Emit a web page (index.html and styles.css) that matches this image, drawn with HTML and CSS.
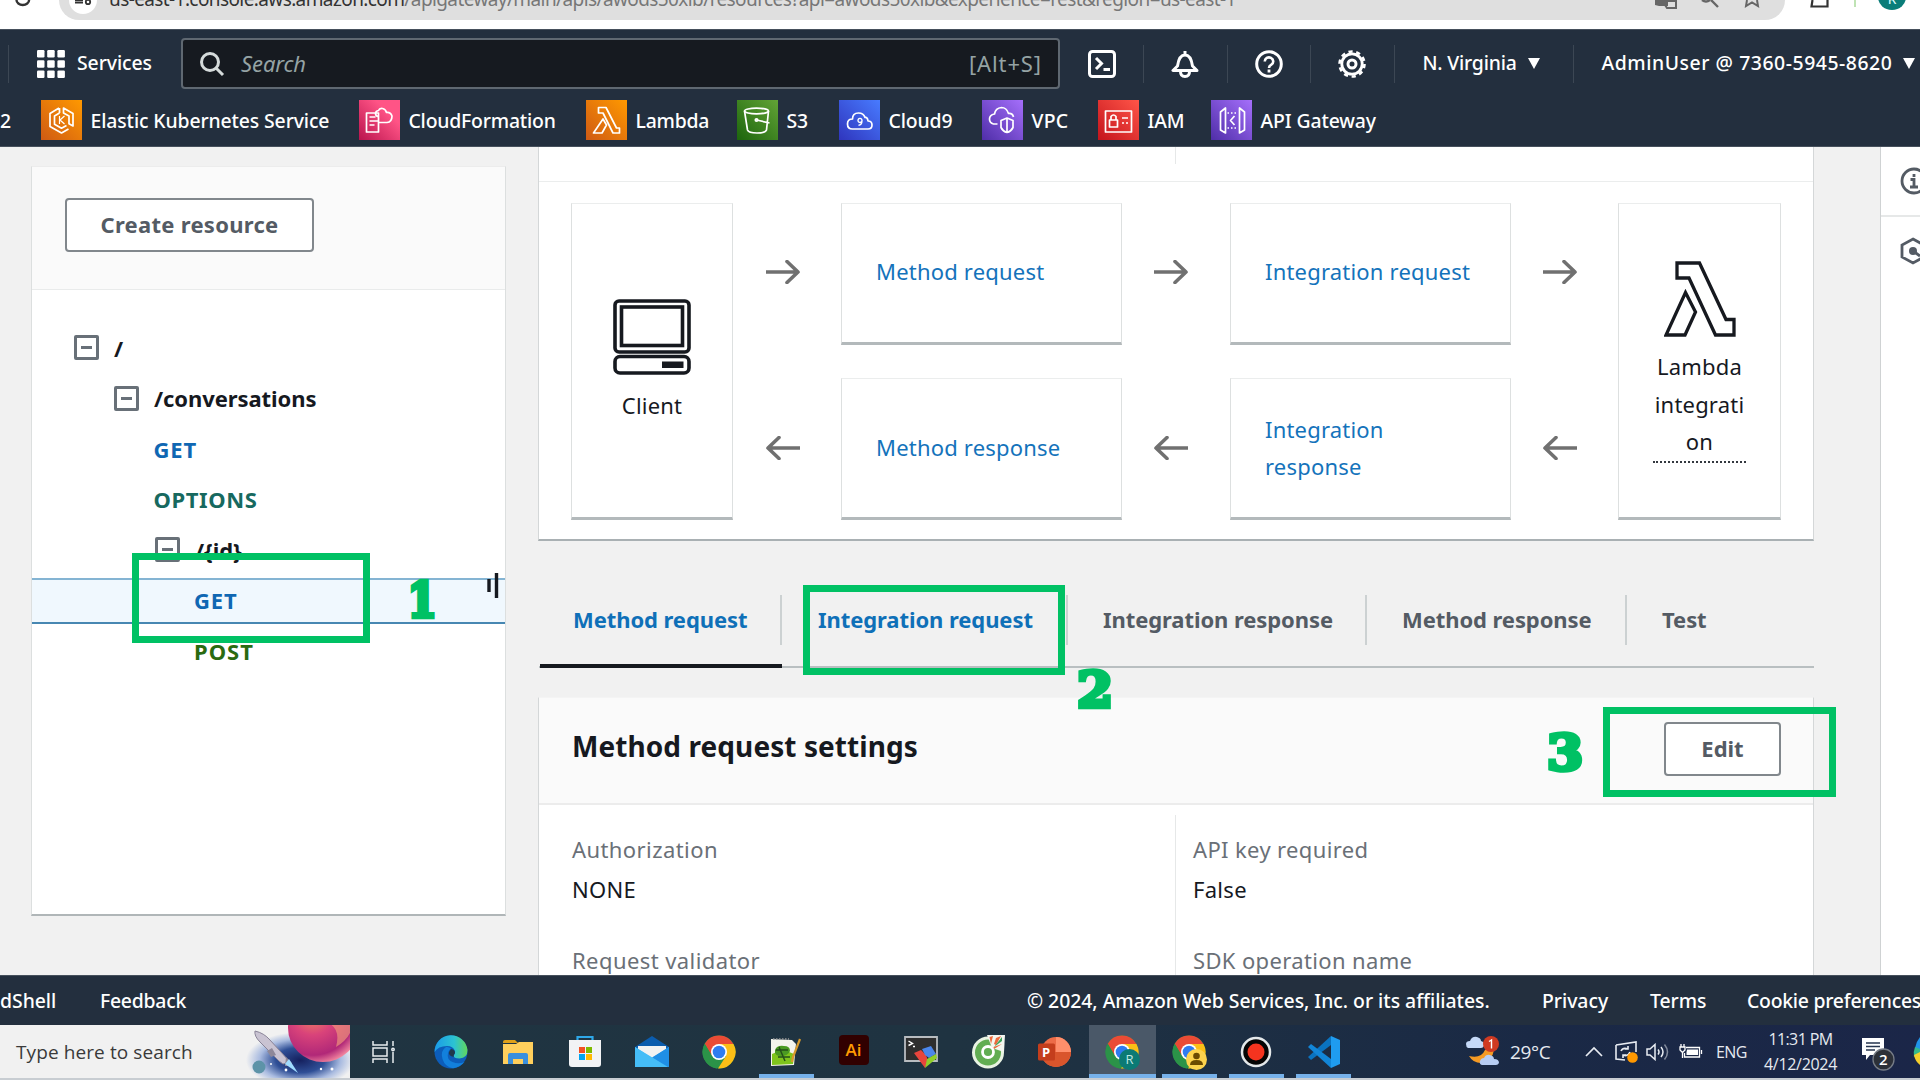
FILE: index.html
```html
<!DOCTYPE html>
<html lang="en">
<head>
<meta charset="utf-8">
<title>API Gateway - Resources</title>
<link rel="stylesheet" href="styles.css">
</head>
<body>
<div class="browser">
  <svg class="reload" width="16" height="8" viewBox="0 0 16 8"><path d="M1.5 0a6.3 5 0 0 0 12.6 0" fill="none" stroke="#333" stroke-width="2.4"/></svg>
  <div class="omnibox">
    <span class="site-info"><svg width="20" height="9" viewBox="0 0 20 9"><path d="M1 0.8h8M1 2.8h8" stroke="#333" stroke-width="1.6"/><circle cx="14" cy="2" r="2.2" fill="none" stroke="#333" stroke-width="1.8"/></svg></span>
    <span class="url"><b>us-east-1.console.aws.amazon.com</b>/apigateway/main/apis/awods50xib/resources?api=awods50xib&amp;experience=rest&amp;region=us-east-1</span>
    <svg class="omni-icons" width="112" height="10" viewBox="0 0 112 10"><path d="M0 0h13v6H4L0 5z" fill="#666"/><path d="M12 1h9v7h-9l-2-3" fill="none" stroke="#666" stroke-width="2"/><path d="M47 0q4 3 8 0M56 0l7 7" fill="none" stroke="#666" stroke-width="2.4"/><path d="M92 0l-1 6 6-3.500 6 3.500-1-6" fill="none" stroke="#666" stroke-width="2"/></svg>
  </div>
  <svg class="ext" width="22" height="8" viewBox="0 0 22 8"><path d="M2.500 0L1.500 6.500h16V0" fill="none" stroke="#333" stroke-width="2.200"/></svg>
  <i class="ext-line"></i>
  <span class="profile">R</span>
</div>

<header class="nav">
  <div class="nav-main">
    <svg class="apps" width="28" height="28" viewBox="0 0 28 28" fill="#fff"><rect width="7.500" height="7.500" rx="1.200"/><rect x="10.200" width="7.500" height="7.500" rx="1.200"/><rect x="20.400" width="7.500" height="7.500" rx="1.200"/><rect y="10.200" width="7.500" height="7.500" rx="1.200"/><rect x="10.200" y="10.200" width="7.500" height="7.500" rx="1.200"/><rect x="20.400" y="10.200" width="7.500" height="7.500" rx="1.200"/><rect y="20.400" width="7.500" height="7.500" rx="1.200"/><rect x="10.200" y="20.400" width="7.500" height="7.500" rx="1.200"/><rect x="20.400" y="20.400" width="7.500" height="7.500" rx="1.200"/></svg>
    <span class="services">Services</span>
    <div class="search">
      <svg width="26" height="26" viewBox="0 0 26 26" fill="none" stroke="#d5dbdb" stroke-width="3"><circle cx="11" cy="11" r="8.500"/><path d="M17 17l7 7"/></svg>
      <span class="ph">Search</span><span class="key">[Alt+S]</span>
    </div>
    <div class="tool"><svg width="28" height="28" viewBox="0 0 28 28" fill="none" stroke="#fff" stroke-width="3"><rect x="1.500" y="1.500" width="25" height="25" rx="3"/><path d="M8 8l5.500 5.500L8 19M15.500 19.500H22"/></svg></div>
    <div class="tool"><svg width="28" height="28" viewBox="0 0 28 28" fill="none" stroke="#fff" stroke-width="3" stroke-linejoin="round"><path d="M14 1v4M2 20.500h24L21.500 16C20.500 9 18 5 14 5S7.500 9 6.500 16zM9.500 21.500q0 5 4.500 5t4.500-5"/></svg></div>
    <div class="tool"><svg width="28" height="28" viewBox="0 0 28 28" fill="none" stroke="#fff" stroke-width="3"><circle cx="14" cy="14" r="12.300"/><path d="M9.800 11.500a4.200 4 0 1 1 6.500 3.200Q14 16 14 18" stroke-width="2.600"/><path d="M14 19.500v3" stroke-width="2.800"/></svg></div>
    <div class="tool"><svg width="28" height="28" viewBox="0 0 28 28" fill="none" stroke="#fff"><circle cx="14" cy="14" r="10.200" stroke-width="2.800"/><circle cx="14" cy="14" r="12.500" stroke-width="2.600" stroke-dasharray="4.200 3.650"/><circle cx="14" cy="14" r="4" stroke-width="3"/></svg></div>
    <div class="region"><span>N. Virginia</span><i class="tri"></i></div>
    <div class="account"><span>AdminUser @ 7360-5945-8620</span><i class="tri"></i></div>
  </div>
  <div class="favs">
    <span class="fav cut">2</span>
    <span class="fav"><svg class="fi orange" viewBox="0 0 40 40"><path d="M17.500 8L8.500 13.500v13L20 33l7-4M22 8l9.500 5.500v12.500l-4-2.200V16L22 13zM18 13l-5 3v8.200l7 4 5-2.800M18 8v5"/><path d="M18 16v8M23 16l-4.500 4 4.500 4" stroke-width="1.200"/></svg>Elastic Kubernetes Service</span>
    <span class="fav f2"><svg class="fi pink" viewBox="0 0 40 40"><path d="M7 13h12v19H7zM10 17h6M10 21h9M10 25h5M19 17q-3-1-3-3.500t3-3q1-2.500 4-2t4 4q4-.5 5.500 3.500 0 6-5 6.500H19M19 21v-4"/></svg>CloudFormation</span>
    <span class="fav f3"><svg class="fi orange" viewBox="0 0 40 40"><path d="M12 7.500h7.500L30 28h3v5h-6.500l-10-20H12zM16.500 19l3.500 6-4.500 8H7z"/></svg>Lambda</span>
    <span class="fav f4"><svg class="fi green" viewBox="0 0 40 40"><ellipse cx="19" cy="11" rx="12" ry="2.800"/><path d="M7 11l3 19q1 3 9.500 3t9.500-3l2-19M19 20l13 3"/><circle cx="19" cy="20" r="1.200"/></svg>S3</span>
    <span class="fav f5"><svg class="fi blue" viewBox="0 0 40 40"><path d="M13 29q-5 0-5-5t5-5q0-6 6-6 5 0 6.500 4.500 2.500-.5 3 3.500 4 0 4 4t-4 4z"/><path d="M22.500 20.500a2 2 0 1 1 0-.2q0 5-3.500 5" stroke-width="1.400"/></svg>Cloud9</span>
    <span class="fav f6"><svg class="fi purple" viewBox="0 0 40 40"><path d="M15 24h-4q-4-1-4-5t5-5q1-6 7-6.500 5 0 7 6 4-.5 5 3.500M24.500 18l6 2.500v7q-2 4-6 5-4-1-6-5v-7zM24.500 18v14.500"/></svg>VPC</span>
    <span class="fav f7"><svg class="fi red" viewBox="0 0 40 40"><path d="M7 11h26v21H7zM11 20h8v7h-8zM12.500 20v-3.500q2.500-3 5 0V20M23.500 18h6M23.500 23h2M27.500 23h2"/></svg>IAM</span>
    <span class="fav f8"><svg class="fi purple" viewBox="0 0 40 40"><path d="M9 12l5-4v25l-5-3zM33 12l-5-4v25l5-3zM23 16l-4 4.500 4 4.500"/><path d="M16 13h10M16 28h10" stroke-dasharray="1.500 2"/></svg>API Gateway</span>
  </div>
</header>

<div class="content">
  <aside class="side">
    <div class="side-head"><button class="btn create">Create resource</button></div>
    <div class="tree">
      <div class="row l0"><i class="tog"></i><span>/</span></div>
      <div class="row l1"><i class="tog"></i><span>/conversations</span></div>
      <div class="row m2 get">GET</div>
      <div class="row m2 opt">OPTIONS</div>
      <div class="row l2"><i class="tog"></i><span>/{id}</span></div>
      <div class="row m3 get sel">GET</div>
      <div class="row m3 post">POST</div>
    </div>
    <svg class="grip" width="12" height="28" viewBox="0 0 12 28"><path d="M2 7v13M9.500 1v25" stroke="#16191f" stroke-width="3.400"/></svg>
    <div class="mark mark1"></div><div class="num num1">1</div>
  </aside>

  <main class="main">
    <section class="card flow">
      <div class="summary"><i></i></div>
      <div class="diagram">
        <div class="box end">
          <svg width="78" height="76" viewBox="0 0 78 76" fill="none" stroke="#16191f" stroke-width="3.600"><rect x="2" y="2" width="74" height="51" rx="4"/><rect x="8.500" y="8" width="61" height="38.500"/><rect x="2" y="57.500" width="74" height="16.500" rx="5"/><rect x="49" y="62.500" width="21.500" height="6.500" fill="#16191f" stroke="none"/></svg>
          <span>Client</span>
        </div>
        <svg class="arr a1" viewBox="0 0 34 24"><path d="M0 12h31M21 1.500L32 12 21 22.500"/></svg>
        <div class="box up c3"><a>Method request</a></div>
        <svg class="arr a2" viewBox="0 0 34 24"><path d="M0 12h31M21 1.500L32 12 21 22.500"/></svg>
        <div class="box up c5"><a>Integration request</a></div>
        <svg class="arr a3" viewBox="0 0 34 24"><path d="M0 12h31M21 1.500L32 12 21 22.500"/></svg>
        <div class="box end lam">
          <svg width="72" height="76" viewBox="0 0 72 76" fill="none" stroke="#16191f" stroke-width="3.300"><path d="M13 2h22.500L62 58.500h8V74H51.500L25 17H13zM21.500 31.500L31.500 51 21 74H2z"/></svg>
          <span class="lt">Lambda<br>integrati<br>on</span>
        </div>
        <svg class="arr a1 b" viewBox="0 0 34 24"><path d="M34 12H3M13 1.500L2 12l11 10.500"/></svg>
        <div class="box c3 low"><a>Method response</a></div>
        <svg class="arr a2 b" viewBox="0 0 34 24"><path d="M34 12H3M13 1.500L2 12l11 10.500"/></svg>
        <div class="box c5 low"><a>Integration<br>response</a></div>
        <svg class="arr a3 b" viewBox="0 0 34 24"><path d="M34 12H3M13 1.500L2 12l11 10.500"/></svg>
      </div>
    </section>
    <nav class="tabs">
      <div class="tab on"><span>Method request</span></div>
      <div class="tab hov"><span>Integration request</span></div>
      <div class="tab"><span>Integration response</span></div>
      <div class="tab t4"><span>Method response</span></div>
      <div class="tab"><span>Test</span></div>
    </nav>
    <section class="card settings">
      <div class="set-head"><h2>Method request settings</h2><button class="btn edit">Edit</button></div>
      <div class="fields">
        <div class="col"><label>Authorization</label><p>NONE</p><label>Request validator</label></div>
        <div class="col right"><label>API key required</label><p>False</p><label>SDK operation name</label></div>
      </div>
    </section>
    <div class="mark mark2"></div><div class="num num2">2</div>
    <div class="mark mark3"></div><div class="num num3">3</div>
  </main>

  <div class="rail">
    <div class="rail-item"><svg width="28" height="28" viewBox="0 0 28 28" fill="none" stroke="#545b64" stroke-width="2.800"><circle cx="14" cy="14" r="12"/><path d="M10.500 12.500H14V20M10 20h8M14 7v3" /></svg></div>
    <div class="rail-item r2"><svg width="26" height="28" viewBox="0 0 26 28" fill="none" stroke="#545b64" stroke-width="2.800"><path d="M13 2l11 6v12l-11 6-11-6V8z"/><circle cx="13" cy="14" r="4" fill="#545b64" stroke="none"/><path d="M13 14l7 5"/></svg></div>
  </div>
</div>

<footer class="foot">
  <span class="shell">dShell</span><span class="feedback">Feedback</span>
  <span class="copy">© 2024, Amazon Web Services, Inc. or its affiliates.</span>
  <span>Privacy</span><span>Terms</span><span class="cookie">Cookie preferences</span>
</footer>

<div class="taskbar">
  <div class="tsearch"><span>Type here to search</span>
    <svg width="104" height="54" viewBox="0 0 104 54">
      <defs><radialGradient id="sky" cx=".52" cy=".65" r=".52"><stop offset="0" stop-color="#15205e"/><stop offset=".45" stop-color="#2f4f96"/><stop offset=".75" stop-color="#a9bbe0"/><stop offset="1" stop-color="#f1f1f1"/></radialGradient>
      <radialGradient id="pl" cx=".35" cy=".3" r=".75"><stop offset="0" stop-color="#f08a5c"/><stop offset=".4" stop-color="#d9437a"/><stop offset=".8" stop-color="#b12878"/><stop offset="1" stop-color="#f58aa0"/></radialGradient></defs>
      <rect width="104" height="54" fill="url(#sky)"/>
      <ellipse cx="77" cy="3" rx="35" ry="34" fill="url(#pl)"/><path d="M76-4q20 4 14 26 10-6 14-14V0H76z" fill="#f7a37c" opacity=".6"/>
      <path d="M9 6q9 2 15 9l20 22-7 2-4-3-19-19Q8 11 9 6z" fill="#c9c3d2" stroke="#8a8498" stroke-width="1"/><path d="M26 23l-5 3 4 6 5-2zM40 32l6 6-1 3-6 0z" fill="#8e8899"/><path d="M43 34l9 14-13-9z" fill="#9fdcff"/>
      <circle cx="13" cy="42" r="6.500" fill="#5d93a8"/><g fill="#fff"><circle cx="25" cy="39" r="1"/><circle cx="40" cy="45" r="1.400"/><circle cx="75" cy="44" r="1.200"/><circle cx="86" cy="44" r="1.500"/></g>
    </svg>
  </div>
  <div class="apps-row">
    <div class="app"><svg width="24" height="24" viewBox="0 0 24 24" fill="none" stroke="#e8edf0" stroke-width="1.500"><path d="M1 1v4h14V1M1 8h14v8H1zM1 23v-4h14v4M21 1v5M21 12v11"/><circle cx="21" cy="9.500" r="1.200"/></svg></div>
    <div class="app"><svg width="34" height="34" viewBox="0 0 34 34"><defs><linearGradient id="eg" x1="0" x2="1"><stop offset="0" stop-color="#1a9be8"/><stop offset=".6" stop-color="#2cc3d2"/><stop offset="1" stop-color="#62d65a"/></linearGradient></defs><circle cx="17" cy="17" r="16.500" fill="#0c5dba"/><path d="M.6 17A16.500 16.500 0 0 1 33.500 15q0 8-8 8.500-6 0-6-3 2-2 1.500-4.500Q19 11 13 11 4 11 .6 17z" fill="url(#eg)"/><path d="M12 12q-6 4-3.500 12Q11 32 19 33.300q7-1 11.500-6.300-6 2.500-12 0T14 18q.5-3 3-4.500-2-2-5-1.500z" fill="#1280dc"/><path d="M17 14q4 .5 4 4-2 3-1 4-6-1-5-5z" fill="#203a4c"/></svg></div>
    <div class="app"><svg width="30" height="26" viewBox="0 0 30 26"><path d="M0 3q0-2 2-2h10l3 3H0z" fill="#e0a018"/><path d="M0 5h13l3-2h14v22H0z" fill="#ffcf5c"/><path d="M5 25V16q0-2 2-2h16q2 0 2 2v9h-5v-5H10v5z" fill="#3a8fdd"/></svg></div>
    <div class="app"><svg width="34" height="33" viewBox="0 0 34 33"><path d="M9.500 6V2h15v4" fill="none" stroke="#2ea7e8" stroke-width="2.200"/><path d="M1 5h32v24q0 3-3 3H4q-3 0-3-3z" fill="#f2f3f5"/><path d="M11 12h6v6h-6z" fill="#f25022"/><path d="M18 12h6v6h-6z" fill="#7fba00"/><path d="M11 19h6v6h-6z" fill="#00a4ef"/><path d="M18 19h6v6h-6z" fill="#ffb900"/></svg></div>
    <div class="app"><svg width="34" height="32" viewBox="0 0 34 32"><path d="M0 11L17 0l17 11v4H0z" fill="#0b5cad"/><path d="M3 10h28v14H3z" fill="#f2f2f2"/><path d="M0 11l17 11L34 11v20H0z" fill="#38b6f5"/><path d="M17 21.500L34 11v20H31z" fill="#1f8fe6"/><path d="M0 11l33 20H0z" fill="#45bdf7"/></svg></div>
    <div class="app"><svg width="34" height="34" viewBox="0 0 34 34"><use href="#chrome"/></svg></div>
    <div class="app run"><svg width="32" height="32" viewBox="0 0 32 32"><path d="M1 3l21 1 4 4-2 21-23 1z" fill="#f4f4ec"/><path d="M2 18q11-6 22 0l-1 10-21 1z" fill="#7fc41c"/><path d="M5 14q2-5 9-4 6 0 6 5-2 5-9 5-7 0-6-6z" fill="#4a9a22"/><path d="M6 14h12M8 21h12M9 11l6 14" stroke="#24501a" stroke-width="1.500"/><path d="M3 3h16" stroke="#999" stroke-width="1.500" stroke-dasharray="1.500 1.500"/><path d="M30 3l-7 18-1 5" stroke="#d99a2b" stroke-width="2.200" fill="none"/></svg></div>
    <div class="app"><span class="ai">Ai</span></div>
    <div class="app"><svg width="34" height="34" viewBox="0 0 34 34"><path d="M1 2h32v24H1z" fill="#2e2e2e" stroke="#b8bcc0" stroke-width="1.800"/><path d="M4.500 6l4 2.500-4 2M9 11.500h2" stroke="#fff" stroke-width="1.400" fill="none"/><path d="M10 18l7-3 5 5 2 6-3 7z" fill="#e8453c"/><path d="M18 14l9-3 5 8-7 4-4-3z" fill="#4b86ea"/><path d="M21 33l2-9 9-5 1 4z" fill="#8fce2a"/></svg></div>
    <div class="app"><svg width="34" height="34" viewBox="0 0 34 34"><circle cx="17" cy="17.500" r="14.500" fill="#62ad52" stroke="#e9f3e2" stroke-width="3"/><circle cx="17" cy="17" r="5.500" fill="#62ad52" stroke="#fff" stroke-width="2.800"/><path d="M16 0h18l-1 17-12-4z" fill="#f4f6f0"/><path d="M18.500 2l3.500-1-2 8zM30 1l-5 9-2-1 2-6zM31 9l-8 5-.5-2z" fill="#ec6b3e"/><path d="M31 2l-8 10 8-6z" fill="#3da35a"/></svg></div>
    <div class="app"><svg width="33" height="32" viewBox="0 0 33 32"><circle cx="18" cy="16" r="15" fill="#ed6c47"/><path d="M18 1a15 15 0 0 1 15 15H18z" fill="#ff8f6b"/><path d="M3 16h30a15 15 0 0 1-30 0z" fill="#d9552c"/><rect y="7.500" width="17" height="17" rx="1.500" fill="#c43e1c"/><text x="4" y="20.500" class="pp">P</text></svg></div>
    <div class="app run active"><svg width="34" height="34" viewBox="0 0 34 34" overflow="visible"><use href="#chrome"/><circle cx="24.500" cy="24.500" r="10.500" fill="#0b7a75"/><text x="20.500" y="29" class="rr">R</text></svg></div>
    <div class="app run"><svg width="34" height="34" viewBox="0 0 34 34" overflow="visible"><use href="#chrome"/><circle cx="24.500" cy="24.500" r="10.500" fill="#fdd34d"/><circle cx="24.500" cy="21" r="3.300" fill="#6b4a00"/><path d="M18 30q0-5 6.500-5t6.500 5z" fill="#6b4a00"/></svg></div>
    <div class="app run"><svg width="32" height="32" viewBox="0 0 32 32"><circle cx="16" cy="16" r="14" fill="#050505" stroke="#e4e8ea" stroke-width="2.500"/><circle cx="16" cy="16" r="8.500" fill="#f5341f"/></svg></div>
    <div class="app run"><svg width="34" height="34" viewBox="0 0 34 34"><path d="M24 1l9 4v24l-9 4z" fill="#1f9cf0"/><path d="M24 1L1 22l3 3 20-15z" fill="#0a73c0"/><path d="M24 33L1 12l3-3 20 15z" fill="#1286d8"/></svg></div>
  </div>
  <div class="weather"><svg width="34" height="32" viewBox="0 0 34 32"><path d="M28 14q-2 12-13 13-8 0-12-7 12 3 16-6l5-3z" fill="#f59a23"/><path d="M2 12q-2-1-2-4t4-3q2-5 7-4 4 1 4 4 4 1 3 5-1 2-3 2z" fill="#c5d9f7"/><path d="M16 29q-3-1-2-4t4-3q2-4 6-3 4 1 4 4 5 0 5 4-1 2-3 2z" fill="#b7cdf3"/><circle cx="25" cy="8" r="8" fill="#cf3a22"/><path d="M23 5.500l2.500-1.500v8.500" fill="none" stroke="#fff" stroke-width="1.400"/></svg><span>29°C</span></div>
  <div class="tray">
    <svg width="18" height="11" viewBox="0 0 18 11"><path d="M1 10l8-8 8 8" fill="none" stroke="#e8ecf2" stroke-width="1.700"/></svg>
    <svg width="24" height="22" viewBox="0 0 24 22" fill="none" stroke="#e8ecf2" stroke-width="1.600"><path d="M1 4l20-3v10M1 4v14l9 1"/><path d="M6 10q2-4 7-2M15 11q-2 5-7 3M13 5v3h-3M8 17v-3h3"/><circle cx="17.500" cy="16.500" r="5.300" fill="#ff9800" stroke="none"/></svg>
    <svg width="24" height="18" viewBox="0 0 24 18" fill="none" stroke="#e8ecf2" stroke-width="1.500"><path d="M1 6h3l5-4.500v15L4 12H1zM12 6.500q2 2.500 0 5M15 4q4 5 0 10"/><path d="M18.500 1.500q6 7.500 0 15" opacity=".5"/></svg>
    <svg width="24" height="16" viewBox="0 0 24 16"><path d="M7 3.500h13.500v9.500H5.500V9" fill="none" stroke="#fff" stroke-width="1.300"/><path d="M8 5.500h11v5.500H7.500V8.500z" fill="#fff"/><path d="M22.500 6v4M1 3h5v3L4 8H3L1 6zM2 0v3M5 0v3M3.500 8v6" fill="none" stroke="#fff" stroke-width="1.300"/></svg>
    <span class="eng">ENG</span>
  </div>
  <div class="clock"><span>11:31 PM</span><span class="date">4/12/2024</span></div>
  <div class="notif"><svg width="36" height="36" viewBox="0 0 36 36"><path d="M1 3h22v17H9l-4 5v-5H1z" fill="#fff"/><path d="M5 8h14M5 11.500h14M5 15h9" stroke="#26344e" stroke-width="1.400"/><circle cx="22.500" cy="24.500" r="10.500" fill="#2c3038" stroke="#777d87" stroke-width="1.300"/><text x="18" y="30" class="nn">2</text></svg></div>
  <svg class="edge-app" width="7" height="30" viewBox="0 0 7 30"><path d="M7 0Q3 5 2 11l5 3z" fill="#2094e8"/><path d="M2 10Q0 15 1 20l6-3v-5z" fill="#35b98b"/><path d="M1 18q1 6 6 10V15z" fill="#f6cf2c"/></svg>
</div>

<svg class="defs" width="0" height="0"><defs><g id="chrome"><circle cx="17" cy="17" r="16.500" fill="#2b9348"/><path d="M17 9h14.500A16.500 16.500 0 0 1 16 33.500L24 21z" fill="#fcbf16"/><path d="M2.700 8.700A16.500 16.500 0 0 1 31.500 9H17L10 21z" fill="#ea4b35"/><path d="M2.700 8.700L10 21l7 4-2 8.400A16.500 16.500 0 0 1 2.700 8.700z" fill="#2b9348"/><circle cx="17" cy="17" r="8" fill="#fff"/><circle cx="17" cy="17" r="6.300" fill="#2f7cf0"/></g></defs></svg>
</body>
</html>
```
FILE: styles.css
```css
* { box-sizing: border-box; }
body {
  margin: 0; width: 1920px; height: 1080px; overflow: hidden;
  display: flex; flex-direction: column;
  font-family: "Noto Sans", "Open Sans", sans-serif; font-size: 22px; color: #16191f;
  background: #f1f1f1;
}
svg { display: block; flex: none; }
.defs { position: absolute; }
a { color: #1473bb; }
p, h2 { margin: 0; }

/* browser address bar */
.browser { height: 29px; flex: none; background: #fff; display: flex; align-items: flex-start; padding-left: 15px; }
.omnibox { margin-left: 28px; width: 1726px; height: 20px; background: #dfdfdf; border-radius: 0 0 24px 24px; display: flex; overflow: hidden; }
.site-info { width: 28px; height: 14px; margin-left: 10px; background: #fff; border-radius: 0 0 14px 14px; padding-left: 5px; }
.url { margin: -13px 0 0 12px; width: 1130px; font-size: 19px; line-height: 24px; letter-spacing: -0.6px; white-space: nowrap; color: #777; }
.url b { font-weight: 400; color: #333; }
.omni-icons { margin-left: 416px; }
.ext { margin-left: 25px; }
.ext-line { width: 2px; height: 7px; margin-left: 22px; background: #bfe3b4; }
.profile { width: 28px; height: 26px; margin: -16px 0 0 22px; border-radius: 50%; background: #0a7d79; color: #dff; font-size: 14px; line-height: 30px; text-align: center; }

/* console navigation */
.nav { height: 118px; flex: none; background: #232f3e; border-top: 1px solid #46505c; border-bottom: 1px solid #46505c; color: #fff; font-size: 19.4px; font-weight: 500; white-space: nowrap; }
.nav-main { height: 67px; padding-left: 8px; display: flex; align-items: center; }
.nav-main span { margin-top: -2px; }
.nav-main::before { content: ""; width: 1px; height: 38px; background: #3c4754; }
.apps { margin-left: 28px; }
.services { margin-left: 12px; width: 104px; letter-spacing: -0.08px; }
.search { width: 879px; height: 51px; background: #161a20; border: 2px solid #5f6871; border-radius: 4px; display: flex; align-items: center; padding: 0 16px 0 16px; font-weight: 400; color: #95a3a4; }
.ph { margin-left: 16px; font-size: 22px; font-style: italic; letter-spacing: -0.1px; flex: 1; }
.key { font-size: 22px; letter-spacing: 0.9px; }
.tool { flex: none; width: 84px; height: 38px; display: flex; align-items: center; justify-content: center; border-right: 1px solid #3c4754; }
.tool + .tool { width: 83.500px; }
.region { width: 179px; height: 38px; border-right: 1px solid #3c4754; display: flex; align-items: center; padding-left: 28px; gap: 11px; }
.region span { letter-spacing: -0.2px; }
.account { display: flex; align-items: center; padding-left: 28px; gap: 11px; }
.account span { letter-spacing: 0.55px; }
.tri { width: 0; height: 0; border: 6.5px solid transparent; border-top: 11px solid #fff; border-bottom: 0; }
.favs { height: 48px; padding-bottom: 0; margin-top: -1px; display: grid; grid-template-columns: 41px 318px 227px 151px 102px 143px 116px 113px 1fr; align-items: center; }
.fav { display: flex; align-items: center; gap: 8.500px; letter-spacing: -0.12px; }
.f2, .f3 { letter-spacing: -0.2px; }
.f6 { letter-spacing: 0.3px; }
.fi { width: 41px; height: 40px; fill: none; stroke: #fff; stroke-width: 1.7; stroke-linejoin: round; }
.orange { background: linear-gradient(45deg, #cf5a14, #ff9900); }
.pink { background: linear-gradient(45deg, #b9144e, #ff5486 70%); }
.green { background: linear-gradient(45deg, #1c650d, #62a336); }
.blue { background: linear-gradient(45deg, #2f35bd, #487bff); }
.purple { background: linear-gradient(45deg, #4f2ea8, #a56ffb); }
.red { background: linear-gradient(45deg, #c4141c, #ff5548); }

/* page content */
.content { height: 828px; flex: none; display: grid; grid-template-columns: 475px 1275px 39px; column-gap: 32px; padding-left: 31px; overflow: hidden; }
.btn { background: #fff; border: 2px solid #81878c; border-radius: 4px; font-family: "Noto Sans", sans-serif; font-size: 22px; font-weight: 700; color: #545b64; padding: 0 0 2px; }
.side { position: relative; margin-top: 19px; height: 750px; background: #fff; border: 1px solid #dcdfdf; border-top-color: #ececec; border-bottom: 2px solid #b0b6b8; }
.side-head { height: 123px; background: #fafafa; border-bottom: 1px solid #e9ebeb; padding: 31px 0 0 33px; }
.create { width: 249px; height: 54px; letter-spacing: 0.28px; }
.tree { padding-top: 35px; font-weight: 700; }
.row { height: 46px; margin-bottom: 4.600px; display: flex; align-items: center; gap: 15px; letter-spacing: -0.08px; padding-bottom: 1px; }
.l0 { padding-left: 42px; } .l1 { padding-left: 82px; } .l2 { padding-left: 123px; }
.m2 { padding-left: 121.500px; } .m3 { padding-left: 162px; }
.get { color: #0f67b3; letter-spacing: 0.85px; }
.opt { color: #17695f; letter-spacing: 0.6px; }
.post { color: #2a6a10; letter-spacing: 1px; }
.sel { background: #f0f8fe; border-top: 2px solid #84b4d3; border-bottom: 2px solid #4787b2; }
.tog { width: 25px; height: 25px; border: 3px solid #687078; border-radius: 2px; display: flex; align-items: center; justify-content: center; }
.tog::before { content: ""; width: 11px; height: 3px; background: #687078; }
.grip { position: absolute; left: 455px; top: 405px; }

/* request flow */
.main { position: relative; width: 1276px; }
.card { background: #fff; border: 1px solid #d4d7d8; border-top: 0; }
.flow { height: 394px; border-bottom: 2px solid #a9b0b3; }
.summary { height: 35px; border-bottom: 1px solid #ebeded; padding-left: 636px; }
.summary i { display: block; width: 1px; height: 17px; background: #e6e8e8; }
.diagram { padding: 21px 0 0 32px; display: grid; grid-template: 142px 142px / 162px 108px 281px 108px 281px 107px 163px; row-gap: 33px; }
.box { background: #fff; border: 1px solid #dde0e0; border-top-color: #ebeded; border-bottom: 3px solid #b3b9bb; display: flex; align-items: center; padding-left: 34px; line-height: 37.500px; letter-spacing: 0.2px; grid-row: 1; }
.up { padding-bottom: 3px; }
.low { grid-row: 2; }
.c3 { grid-column: 3; } .c5 { grid-column: 5; }
.end { grid-row: 1 / 3; grid-column: 1; padding: 95px 0 0; flex-direction: column; justify-content: flex-start; text-align: center; }
.end span { margin-top: 12px; }
.lam { grid-column: 7; padding-top: 57px; }
.lam .lt { width: 93px; margin-top: 11px; padding-bottom: 0; border-bottom: 2px dotted #33383f; }
.arr { width: 34px; height: 24px; fill: none; stroke: #707070; stroke-width: 3.600; margin: 57px 0 0 33px; stroke-linecap: round; stroke-linejoin: round; grid-row: 1; }
.a1 { grid-column: 2; } .a2 { grid-column: 4; margin-left: 32px; } .a3 { grid-column: 6; margin-left: 32px; }
.b { margin-top: 58px; grid-row: 2; }

/* tabs */
.tabs { margin: 54px 0 29px 1px; height: 73px; border-bottom: 2px solid #b9bfc1; display: grid; grid-template-columns: 243px 286px 299px 260px 1fr; font-weight: 700; color: #545b64; }
.tab { height: 73px; padding: 0; }
.tab span { display: flex; align-items: center; height: 50px; padding: 0 0 3px 35px; border-right: 2px solid #ccd1d2; letter-spacing: -0.08px; }
.tab:last-child span { border: 0; padding-left: 35px; }
.t4 span { padding-left: 35px; }
.on, .hov { color: #0f70b8; }
.tab.hov span { padding-left: 36px; }
.on { border-bottom: 4px solid #16191f; margin-left: 1px; }
.tab.on span { padding-left: 33px; }

/* settings */
.settings { height: 400px; border-top: 1px solid #f4f4f4; }
.set-head { height: 107px; background: #fafafa; border-bottom: 2px solid #ececec; padding: 0 32px 4px 33px; display: flex; align-items: center; justify-content: space-between; }
.set-head h2 { font-size: 28px; font-weight: 700; letter-spacing: 0.08px; margin-top: -6px; }
.edit { width: 117px; height: 54px; }
.fields { display: grid; grid-template-columns: 636px 1fr; padding-top: 10px; letter-spacing: 0.42px; }
.col { height: 200px; padding: 19px 0 0 33px; display: flex; flex-direction: column; line-height: 30px; }
.col label { color: #6a7077; }
.col p { margin: 10px 0 41px; letter-spacing: 0.3px; }
.right { border-left: 1px solid #e6e8e8; padding-left: 17px; letter-spacing: 0.36px; margin-top: 0; }

/* step callouts */
.mark { position: absolute; border: 7px solid #00c164; }
.num { position: absolute; font: 700 49px/1 "DejaVu Serif", serif; color: #00c164; -webkit-text-stroke: 4.500px #00c164; }
.mark1 { left: 100px; top: 386px; width: 238px; height: 90px; }
.num1 { left: 373px; top: 409px; transform: scaleX(.86); }
.mark2 { left: 265px; top: 438px; width: 262px; height: 90px; }
.num2 { left: 540px; top: 519px; transform: scaleX(1.06); }
.mark3 { left: 1065px; top: 560px; width: 233px; height: 90px; }
.num3 { left: 1010px; top: 582px; transform: scaleX(1.06); }

.rail { margin-left: 35px; width: 40px; background: #fff; border-left: 1px solid #cfd2d3; }
.rail-item { height: 70px; padding: 20px 0 0 19px; border-bottom: 2px solid #e6e8e8; overflow: hidden; }
.r2 { border: 0; }

/* console footer */
.foot { height: 50px; flex: none; background: #232f3e; border-top: 1px solid #46505c; color: #fff; font-size: 19.4px; font-weight: 500; letter-spacing: -0.03px; white-space: nowrap; display: grid; grid-template-columns: 100px 927px 515px 108px 97px 1fr; align-items: center; }
.feedback, .cookie { letter-spacing: -0.25px; }

/* windows taskbar */
.taskbar { height: 55px; flex: none; background: linear-gradient(90deg, #203541, #1f3341 50%, #1a2945 80%, #1b2648); border-bottom: 2px solid #c8cdd2; display: flex; color: #e6eaf0; font-family: "Open Sans", sans-serif; }
.tsearch { width: 350px; background: #f1f1f1; display: flex; align-items: center; justify-content: space-between; padding-left: 16px; color: #3a3a3a; font-size: 19px; letter-spacing: 0.1px; overflow: hidden; flex: none; }
.tsearch span { margin-top: 1px; }
.apps-row { display: flex; width: 1007px; }
.app { flex: 1; display: flex; align-items: center; justify-content: center; position: relative; }
.run::after { content: ""; position: absolute; left: 6px; right: 6px; bottom: 0; height: 4px; background: #76b1ea; }
.active { background: #4a5868; }
.active::after { left: 0; right: 0; }
.ai { width: 30px; height: 30px; background: #310000; border-radius: 4px; color: #ff9a00; font: 600 17px/29px "Open Sans", sans-serif; text-align: center; margin-top: -3px; }
.pp { font: 700 13px "Open Sans", sans-serif; fill: #fff; }
.rr { font: 400 13px "Open Sans", sans-serif; fill: #bfe5e2; }
.nn { font: 600 15px "Open Sans", sans-serif; fill: #fff; }
.weather { margin-left: 109px; width: 119px; display: flex; align-items: center; gap: 10px; font-size: 19px; letter-spacing: -0.4px; }
.tray { width: 179px; display: grid; grid-template-columns: 30px 31px 33px 37px 1fr; align-items: center; }
.eng { font-size: 16px; letter-spacing: -0.6px; }
.clock { width: 73px; display: flex; flex-direction: column; justify-content: center; align-items: center; line-height: 25px; font-size: 16px; letter-spacing: -0.6px; white-space: nowrap; padding-top: 1px; }
.date { letter-spacing: -0.3px; }
.notif { margin-left: 24px; width: 52px; display: flex; align-items: center; padding-top: 3px; }
.edge-app { margin-top: 12px; }
```
